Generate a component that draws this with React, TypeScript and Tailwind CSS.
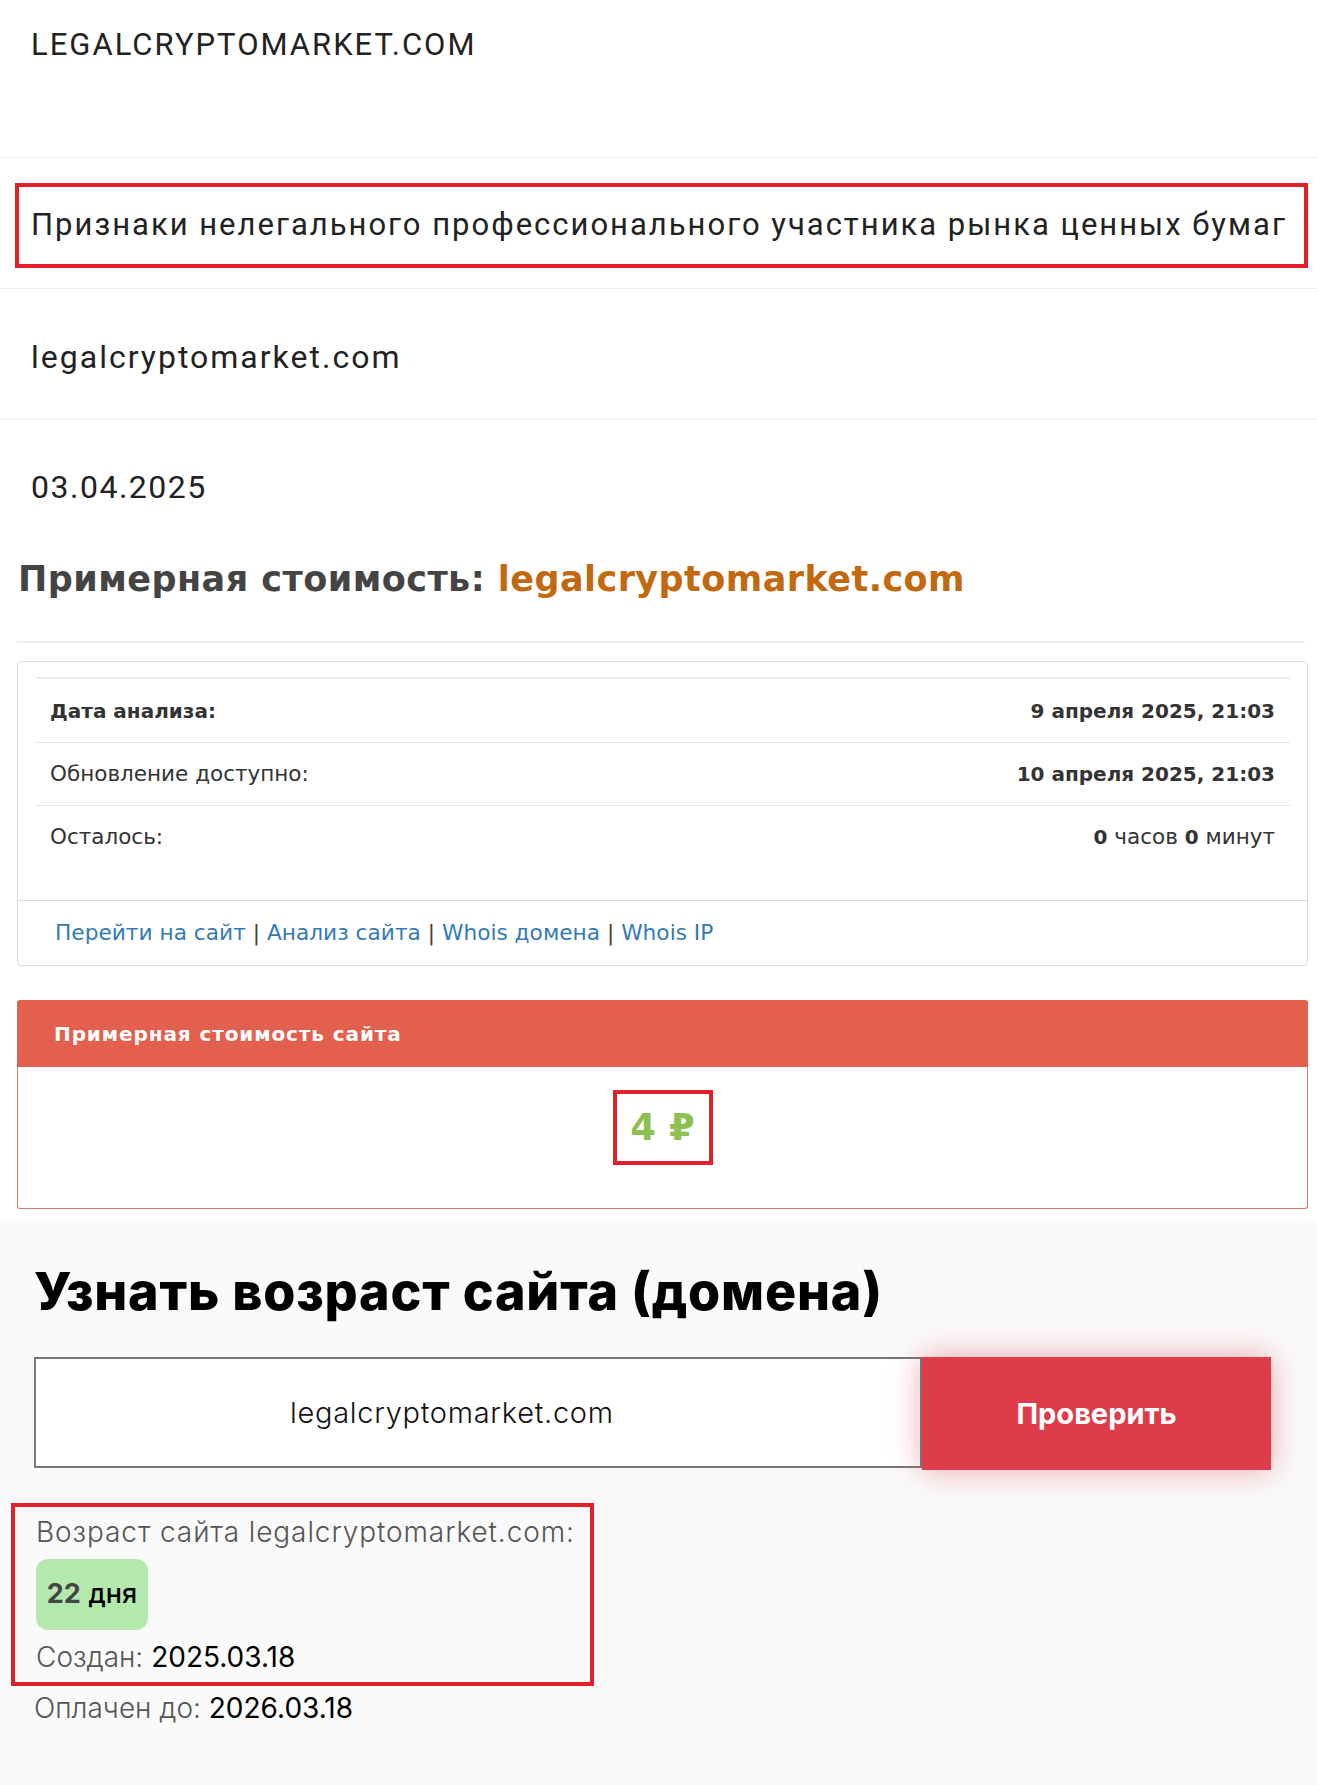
const din = "font-['Roboto','Liberation_Sans',sans-serif]";
const wide = "font-['DejaVu_Sans','Liberation_Sans',sans-serif]";
const mont = "font-['Inter','Noto_Sans',sans-serif]";

function InfoRow({ label, value }: { label: string; value: React.ReactNode }) {
  return (
    <div className="flex h-[63px] items-center justify-between border-t border-[#e6e6e6] px-[15px] text-[21.5px] text-[#333]">
      <span>{label}</span>
      <span>{value}</span>
    </div>
  );
}

export default function App() {
  return (
    <div className="min-h-[1785px] bg-[#fafafa]">
      <div className="bg-white pb-[11px]">
        {/* шапка */}
        <div className={`h-[158px] border-b border-[#ececec] pl-[31px] pt-[26px] ${din}`}>
          <p className="text-[31px] leading-[38px] tracking-[2px] text-[#222]">LEGALCRYPTOMARKET.COM</p>
        </div>

        <div className="border-b border-[#ececec] pb-[20px] pl-[15px] pt-[25px]">
          <div className="flex h-[85px] w-[1293px] items-center border-4 border-[#e3202a] px-[12px]">
            <p className={`whitespace-nowrap text-[31px] tracking-[2px] text-[#222] ${din}`}>
              Признаки нелегального профессионального участника рынка ценных бумаг
            </p>
          </div>
        </div>

        <div className={`h-[131px] border-b border-[#ececec] pl-[31px] pt-[49px] ${din}`}>
          <p className="text-[32px] leading-[38px] tracking-[2px] text-[#222]">legalcryptomarket.com</p>
        </div>

        <div className={`pl-[31px] pt-[48px] ${din}`}>
          <p className="text-[32px] leading-[38px] tracking-[1.5px] text-[#222]">03.04.2025</p>
        </div>

        <h2 className={`mt-[52px] pl-[18px] text-[35px] font-bold leading-[42px] tracking-[0.45px] text-[#444] ${wide}`}>
          Примерная стоимость: <span className="text-[#c2680f]">legalcryptomarket.com</span>
        </h2>
        <div className="ml-[17px] mt-[41px] h-[2px] w-[1288px] bg-[#eeeeee]" />

        {/* карточка анализа */}
        <div className={`ml-[17px] mt-[18px] w-[1291px] rounded-[4px] border border-[#dddddd] bg-white ${wide}`}>
          <div className="px-[17px] pb-[32px] pt-[15px]">
            <div className="border-t-2 border-[#eeeeee]">
              <div className="flex h-[63px] items-center justify-between px-[15px] text-[20px] font-bold text-[#333]">
                <span>Дата анализа:</span>
                <span>9 апреля 2025, 21:03</span>
              </div>
              <InfoRow label="Обновление доступно:" value={<b className="text-[20px]">10 апреля 2025, 21:03</b>} />
              <InfoRow
                label="Осталось:"
                value={
                  <>
                    <b className="text-[20px]">0</b> часов <b className="text-[20px]">0</b> минут
                  </>
                }
              />
            </div>
          </div>
          <div className="flex h-[65px] items-center border-t border-[#dddddd] px-[37px] text-[21.7px] text-[#4a3a30]">
            <a className="text-[#337ab7]">Перейти на сайт</a>&nbsp;|&nbsp;
            <a className="text-[#337ab7]">Анализ сайта</a>&nbsp;|&nbsp;
            <a className="text-[#337ab7]">Whois домена</a>&nbsp;|&nbsp;
            <a className="text-[#337ab7]">Whois IP</a>
          </div>
        </div>

        {/* стоимость */}
        <div className={`ml-[17px] mt-[34px] w-[1291px] ${wide}`}>
          <div className="flex h-[67px] items-center rounded-t-[3px] bg-[#e3604f] pl-[37px] text-[20px] font-bold tracking-[0.9px] text-white">
            Примерная стоимость сайта
          </div>
          <div className="flex h-[142px] justify-center rounded-b-[3px] border border-t-0 border-[#dc7468] bg-white pt-[23px]">
            <div className="flex h-[75px] w-[100px] items-center justify-center border-4 border-[#e3202a] text-[37px] font-bold text-[#8cc152]">
              4 ₽
            </div>
          </div>
        </div>
      </div>

      {/* возраст домена */}
      <div className={`pl-[34px] ${mont}`}>
        <h1 className="pt-[40px] text-[52px] font-extrabold leading-[64px] tracking-[0.8px] text-black">
          Узнать возраст сайта (домена)
        </h1>
        <div className="mt-[33px] flex h-[113px]">
          <input
            readOnly
            value="legalcryptomarket.com"
            className="h-[111px] w-[888px] border-2 border-[#777] bg-white pl-[254px] text-[29px] font-light tracking-[0.7px] text-[#111] outline-none"
          />
          <button className="h-[113px] w-[349px] bg-[#dd3c4b] text-[29px] font-bold text-white shadow-[0_0_30px_rgba(221,60,75,0.45)]">
            Проверить
          </button>
        </div>

        <div className="ml-[-23px] mt-[33px] w-[583px] border-4 border-[#e3202a] pb-[5px] pl-[21px] pt-[5px]">
          <p className="text-[28px] font-light leading-[40px] tracking-[0.9px] text-[#555]">
            Возраст сайта legalcryptomarket.com:
          </p>
          <div className="mt-[7px] flex h-[71px] w-[112px] items-center justify-center rounded-[12px] bg-[#b4e9ae] text-[27px]">
            <b className="text-[#444]">22</b>&nbsp;<span className="font-medium text-black">дня</span>
          </div>
          <p className="mt-[7px] text-[28px] font-light leading-[40px] text-[#555]">
            Создан: <span className="font-normal text-black">2025.03.18</span>
          </p>
        </div>
        <p className="mt-[2px] text-[28px] font-light leading-[40px] text-[#555]">
          Оплачен до: <span className="font-normal text-black">2026.03.18</span>
        </p>
      </div>
    </div>
  );
}
